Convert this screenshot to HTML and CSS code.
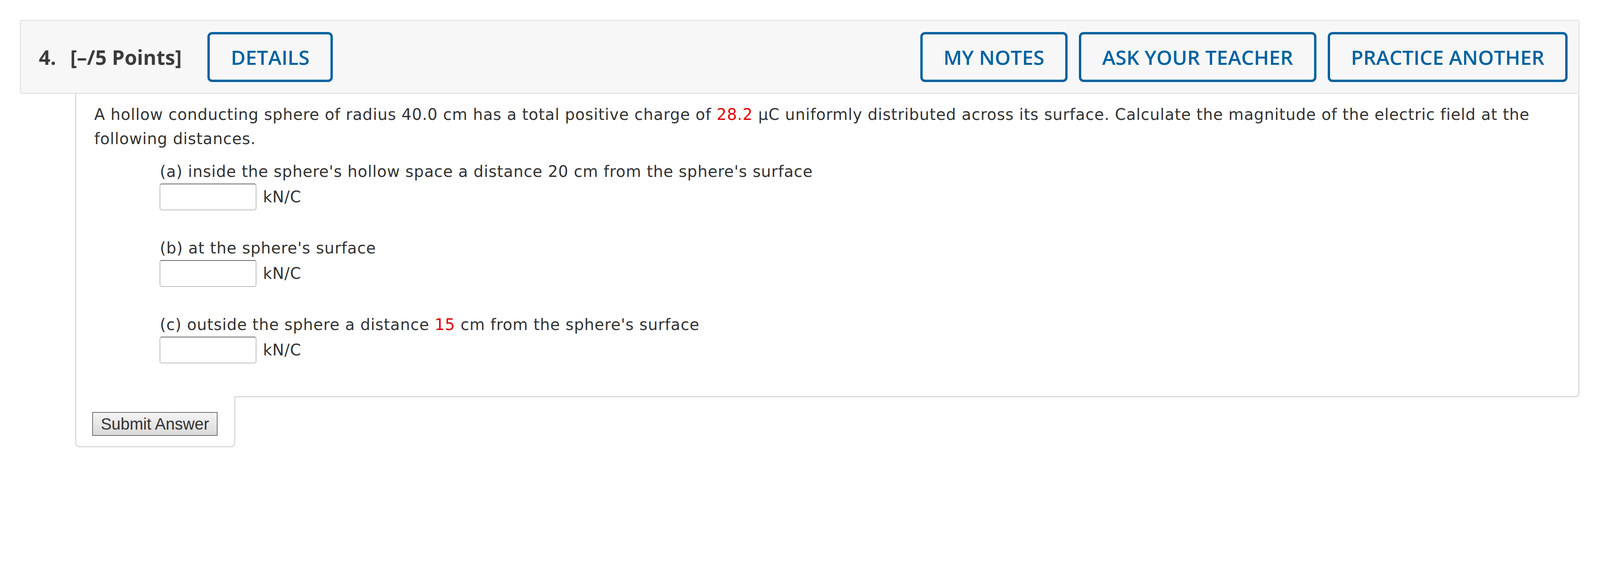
FILE: index.html
```html
<!DOCTYPE html>
<html lang="en">
<head>
  <meta charset="UTF-8">
  <meta name="viewport" content="width=device-width, initial-scale=1.0">
  <title>Question 4</title>
  <link rel="stylesheet" href="styles.css">
</head>
<body>
  <div class="question">
    <header class="question-header">
      <h2 class="question-title"><span class="question-number">4.</span>[–/5 Points]</h2>
      <button class="header-btn">DETAILS</button>
      <div class="header-actions">
        <button class="header-btn">MY NOTES</button>
        <button class="header-btn">ASK YOUR TEACHER</button>
        <button class="header-btn">PRACTICE ANOTHER</button>
      </div>
    </header>
    <section class="question-body">
      <p class="question-text">A hollow conducting sphere of radius 40.0 cm has a total positive charge of <span class="given">28.2</span> µC uniformly distributed across its surface. Calculate the magnitude of the electric field at the following distances.</p>
      <div class="part">
        <div class="part-label">(a) inside the sphere's hollow space a distance 20 cm from the sphere's surface</div>
        <div class="answer-row">
          <input type="text" class="answer-input">
          <span class="unit">kN/C</span>
        </div>
      </div>
      <div class="part">
        <div class="part-label">(b) at the sphere's surface</div>
        <div class="answer-row">
          <input type="text" class="answer-input">
          <span class="unit">kN/C</span>
        </div>
      </div>
      <div class="part">
        <div class="part-label">(c) outside the sphere a distance <span class="given">15</span> cm from the sphere's surface</div>
        <div class="answer-row">
          <input type="text" class="answer-input">
          <span class="unit">kN/C</span>
        </div>
      </div>
    </section>
    <div class="submit-tab">
      <button class="submit-btn">Submit Answer</button>
    </div>
  </div>
</body>
</html>
```

FILE: styles.css
```css
* {
  margin: 0;
  padding: 0;
  box-sizing: border-box;
}
body {
  background-color: #fff;
  font-family: "DejaVu Sans", Verdana, sans-serif;
  color: #333;
}
.question {
  padding: 51.2px 52.8px 0 51.2px;
}
.question-header {
  display: flex;
  align-items: center;
  height: 188.8px;
  padding: 0 28px 0 46.4px;
  background-color: #f7f7f7;
  border: 2.4px solid #dcdcdc;
  border-radius: 5px;
}
.question-title {
  font-family: "Open Sans", sans-serif;
  font-weight: 700;
  font-size: 51.5px;
  color: #3b3b3b;
  margin-right: 66px;
}
.question-number {
  margin-right: 36px;
}
.header-btn {
  height: 128px;
  padding: 0 53.6px;
  font-family: "Open Sans", sans-serif;
  font-weight: 600;
  font-size: 51.5px;
  color: #00629e;
  background-color: transparent;
  border: 6.4px solid #00629e;
  border-radius: 12px;
  cursor: pointer;
}
.header-actions {
  display: flex;
  gap: 28.8px;
  margin-left: auto;
}
.question-body {
  margin-left: 141.6px;
  padding: 21.6px 48px 19.2px 46.4px;
  border: 2.4px solid #cbcbcb;
  border-top: none;
  border-bottom-right-radius: 11px;
  font-size: 40px;
  line-height: 62.4px;
  letter-spacing: 0.9px;
}
.question-text {
  margin-bottom: 21.6px;
}
.given {
  color: #e00000;
}
.part {
  padding-left: 168px;
  margin-bottom: 65.6px;
}
.answer-row {
  display: flex;
  align-items: center;
}
.answer-input {
  width: 247.2px;
  height: 68px;
  border: 1.6px solid #7d7d7d;
  border-top: 2.4px solid #666;
  border-radius: 5px;
  background-color: #fff;
}
.unit {
  margin-left: 16.8px;
}
.submit-tab {
  width: 409.6px;
  margin-left: 141.6px;
  margin-top: -2.4px;
  padding: 40px 0 26.4px 41.6px;
  background-color: #fff;
  border: 2.4px solid #cbcbcb;
  border-top: none;
  border-radius: 0 0 11px 11px;
}
.submit-btn {
  height: 61.6px;
  padding: 0 19.5px;
  font-family: "Liberation Sans", Arial, sans-serif;
  font-size: 41.6px;
  line-height: 1;
  color: #333;
  background: linear-gradient(#f4f4f4, #d9d9d9);
  border: 2.4px solid #6f6f6f;
  cursor: pointer;
}
```
